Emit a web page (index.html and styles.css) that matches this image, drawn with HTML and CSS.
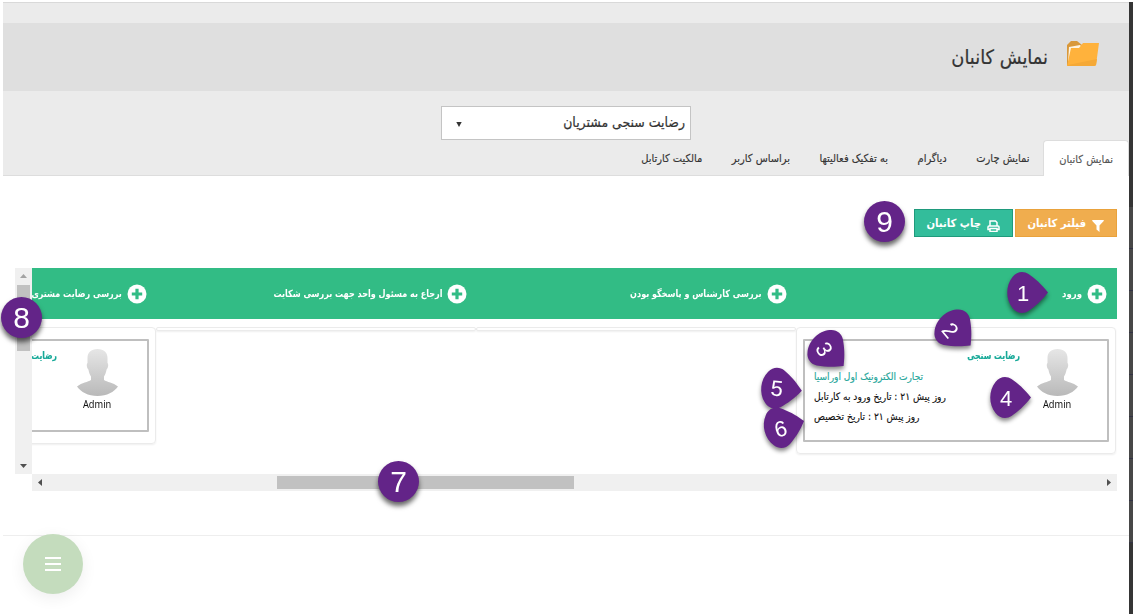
FILE: index.html
```
<!DOCTYPE html>
<html lang="fa" dir="rtl">
<head>
<meta charset="utf-8">
<title>نمایش کانبان</title>
<link rel="stylesheet" href="styles.css">
</head>
<body>
<svg class="defs" width="0" height="0" aria-hidden="true">
  <defs>
    <linearGradient id="grey" x1="0" y1="0" x2="0" y2="1"><stop offset="0" stop-color="#e6e6e6"/><stop offset="1" stop-color="#b9b9b9"/></linearGradient>
    <symbol id="plus" viewBox="0 0 20 20"><circle cx="10" cy="10" r="9.5" fill="#fff"/><path d="M10 4.8v10.4M4.8 10h10.4" stroke="#32bc85" stroke-width="3.2"/></symbol>
    <symbol id="person" viewBox="0 0 41 47"><path d="M20.500 0C27 0 30.500 3.500 30.500 9v5c1.200 1 .8 5-.9 6.500C29 24 28 26 27 27.500v3.500c3 2 9 2.500 14 6.500C37 43 30 47 20.500 47S4 43 0 37.500C5 33.500 11 33 14 31v-3.500C13 26 12 24 11.400 20.500 9.700 19 9.300 15 10.500 14V9C10.500 3.500 14 0 20.500 0Z" fill="url(#grey)"/></symbol>
    <symbol id="drop" viewBox="-30 -30 60 60"><path d="M27 0C20-9 14-14 7.500-18.500C3-21.500-4-21.500-8.500-15.500C-15.500-7-15.500 7-8.500 15.500C-4 21.500 3 21.500 7.500 18.500C14 14 20 9 27 0Z" fill="#632488"/></symbol>
  </defs>
</svg>
<div class="frame">
  <main class="page">
    <header class="top">
      <div class="titlebar">
        <svg class="folder" width="33" height="26" viewBox="0 0 33 26"><path d="M1 24V4L5 0h6l5 4h8v5L3 25Z" fill="#d9983a"/><path d="M2 22 3 6l11-2 3 3-9 2Z" fill="#fff3de"/><path d="M5 7h8l4-5h16l-3 22q-.3 1-2 1H1Z" fill="#ffb23c"/><path d="M2 24 31 18l-1 6-2 1H1Z" fill="#f5a937"/></svg>
        <h1>نمایش کانبان</h1>
      </div>
      <div class="picker"><div class="select"><span>رضایت سنجی مشتریان</span><svg width="6" height="5" viewBox="0 0 6 5"><path d="M.3 0h5.400L3 5Z" fill="#333"/></svg></div></div>
      <nav class="tabs">
        <a class="tab active">نمایش کانبان</a><a class="tab">نمایش چارت</a><a class="tab">دیاگرام</a><a class="tab">به تفکیک فعالیتها</a><a class="tab">براساس کاربر</a><a class="tab">مالکیت کارتابل</a>
      </nav>
    </header>
    <div class="actions">
      <button class="btn filter"><svg width="12" height="12" viewBox="0 0 12 12"><path d="M.5 0h11q.6.5.2 1L7.500 5.500V12L4.500 9.500v-4L.3 1Q0 .4.500 0Z" fill="#fff"/></svg><span>فیلتر کانبان</span></button>
      <button class="btn print"><svg width="13" height="12" viewBox="0 0 13 12"><path d="M3 6V1h5.500L10 2.500V6M2.500 9.500H1V7q0-1 1-1h9q1 0 1 1v2.500h-1.500M3 8.500h7v3H3Z" fill="none" stroke="#fff" stroke-width="1.500"/></svg><span>چاپ کانبان</span></button>
    </div>
    <section class="board">
      <div class="view">
        <div class="heads">
          <div class="head"><svg width="20" height="20"><use href="#plus"/></svg><b class="first">ورود</b></div>
          <div class="head"><svg width="20" height="20"><use href="#plus"/></svg><b>بررسی کارشناس و پاسخگو بودن</b></div>
          <div class="head"><svg width="20" height="20"><use href="#plus"/></svg><b>ارجاع به مسئول واحد جهت بررسی شکایت</b></div>
          <div class="head"><svg width="20" height="20"><use href="#plus"/></svg><b>بررسی رضایت مشتری</b></div>
        </div>
        <div class="columns">
          <div class="column">
            <article class="card">
              <div class="user"><svg width="41" height="47"><use href="#person"/></svg><span>Admin</span></div>
              <div class="info">
                <b>رضایت سنجی</b>
                <p class="company">تجارت الکترونیک اول اوراسیا</p>
                <p>روز پیش ۲۱ : تاریخ ورود به کارتابل</p>
                <p>روز پیش ۲۱ : تاریخ تخصیص</p>
              </div>
            </article>
          </div>
          <div class="column"></div>
          <div class="column"></div>
          <div class="column">
            <article class="card short">
              <div class="user"><svg width="41" height="47"><use href="#person"/></svg><span>Admin</span></div>
              <div class="info"><b>رضایت</b></div>
            </article>
          </div>
        </div>
      </div>
      <div class="vbar"><svg width="7" height="4"><path d="M0 4h7L3.500 0Z" fill="#a3a3a3"/></svg><i></i><svg width="7" height="4"><path d="M0 0h7L3.500 4Z" fill="#505050"/></svg></div>
      <div class="hbar"><svg width="4" height="7"><path d="M4 0v7L0 3.500Z" fill="#505050"/></svg><i></i><svg width="4" height="7"><path d="M0 0v7l4-3.500Z" fill="#505050"/></svg></div>
    </section>
    <footer></footer>
  </main>
  <aside class="rail"><i></i><i></i><i></i><i></i><i></i><i></i><i></i><i></i></aside>
</div>
<button class="fab"><i></i><i></i><i></i></button>
<svg class="marks" width="1133" height="614" viewBox="0 0 1133 614">
  <g class="dot"><circle cx="884.500" cy="221.500" r="20.500"/><circle cx="21.500" cy="317.500" r="20.500"/><circle cx="398.500" cy="481.500" r="20.500"/></g>
  <g class="shade">
    <use href="#drop" x="-30" y="-30" width="60" height="60" transform="translate(1021 292.500)"/>
    <use href="#drop" x="-30" y="-30" width="60" height="60" transform="translate(951.500 326.500) rotate(45)"/>
    <use href="#drop" x="-30" y="-30" width="60" height="60" transform="translate(824.500 347) rotate(45)"/>
    <use href="#drop" x="-30" y="-30" width="60" height="60" transform="translate(1004 397.500)"/>
    <use href="#drop" x="-30" y="-30" width="60" height="60" transform="translate(775 388) rotate(6)"/>
    <use href="#drop" x="-30" y="-30" width="60" height="60" transform="translate(778 428) rotate(-15)"/>
  </g>
  <g class="num big"><text x="884.500" y="231.500">9</text><text x="21.500" y="328">8</text><text x="398.500" y="492">7</text></g>
  <g class="num">
    <text x="1023" y="300.500">1</text>
    <text transform="translate(950.500 330) rotate(50)" y="8">2</text>
    <text transform="translate(824.500 349) rotate(58)" y="8">3</text>
    <text x="1006" y="405.500">4</text>
    <text transform="translate(777 388) rotate(6)" y="8">5</text>
    <text transform="translate(780.500 428.500) rotate(-15)" y="8">6</text>
  </g>
</svg>
</body>
</html>
```
FILE: styles.css
```
* { box-sizing: border-box; }
body { margin: 0; width: 1133px; height: 614px; overflow: hidden; position: relative; background: #fff; color: #333; font-family: "DejaVu Sans Condensed", "DejaVu Sans", sans-serif; font-stretch: condensed; }
svg { display: block; flex: none; }
.defs { position: absolute; }
.frame { display: flex; direction: ltr; height: 614px; padding: 2px 0 0 3px; }
.page { direction: rtl; width: 1126px; }
.top { height: 174px; background: #ebebeb; border-top: 1px solid #d9d9d9; border-bottom: 1px solid #ddd; padding-top: 20px; }
.titlebar { height: 68px; background: #dfdfdf; display: flex; align-items: center; gap: 18px; padding: 0 30px 7px 0; }
h1 { margin: 8px 0 0; font-size: 19.8px; line-height: 30px; font-weight: 400; white-space: nowrap; -webkit-text-stroke: .2px; }
.picker { display: flex; justify-content: center; padding-top: 15px; }
.select { width: 250px; height: 34px; border: 1px solid #c4c4c4; background: #fff; display: flex; align-items: center; justify-content: space-between; padding: 2px 5px 5px 14px; font-size: 13.9px; white-space: nowrap; -webkit-text-stroke: .2px; }
.select svg { margin-top: 6px; }
.tabs { display: flex; gap: 29.500px; height: 36px; font-size: 11px; white-space: nowrap; -webkit-text-stroke: .15px; }
.tab { height: 36px; line-height: 38px; }
.active { width: 86px; margin-left: -16px; padding-right: 15px; border: 1px solid #ddd; border-bottom: 0; border-radius: 4px 4px 0 0; background: #fff; color: #555; line-height: 37px; }
.actions { display: flex; gap: 2px; padding: 33px 12px 0 0; }
.btn { height: 28px; display: flex; align-items: center; gap: 6px; padding: 1px 12px 0 0; font: bold 11.2px "DejaVu Sans Condensed", "DejaVu Sans", sans-serif; font-stretch: condensed; color: #fff; white-space: nowrap; }
.btn svg { margin-top: 4px; }
.filter { width: 102px; background: #f0ad4e; border: 1px solid #e9a23c; }
.print { width: 99px; background: #33bd9b; border: 1px solid #1f9a7c; }
.board { direction: ltr; display: grid; grid-template-columns: 17px 1085px; grid-template-rows: 206px 17px; margin: 31px 0 0 12px; }
.view { direction: rtl; grid-area: 1/2; overflow: hidden; }
.vbar { grid-area: 1/1; background: #f0f0f0; display: flex; flex-direction: column; align-items: center; padding: 6px 0; }
.vbar i { width: 13px; height: 66px; background: #c1c1c1; margin: 7px 0 auto; }
.hbar { grid-area: 2/2; background: #f0f0f0; display: flex; align-items: center; padding: 0 6px; }
.hbar i { width: 297px; height: 13px; background: #c1c1c1; margin: 0 auto 0 235px; }
.heads { display: flex; height: 51px; background: #32bc85; }
.head { flex: 0 0 320px; display: flex; align-items: center; gap: 5px; padding-right: 10px; color: #fff; white-space: nowrap; }
.head b { font-size: 10px; transform: scaleX(.897); transform-origin: right; }
.head .first { transform: scaleX(.95); }
.columns { display: flex; align-items: flex-start; padding: 8px 1px 0 0; }
.column { flex: 0 0 320px; border: 1px solid #ebebeb; border-radius: 4px; box-shadow: 0 1px 2px #0001; padding: 11px 6px; min-height: 4px; }
.column:empty { padding: 1px; }
.card { height: 103px; border: 2px solid #bfbfbf; border-radius: 1px; display: flex; padding: 8px 28px 0 9px; }
.short { height: 93px; }
.user { width: 43px; display: flex; flex-direction: column; align-items: center; font: 10.500px "Noto Sans", "Open Sans", sans-serif; color: #111; }
.user span { line-height: 17px; transform: scaleX(.88); }
.info { flex: 1; padding-right: 16px; white-space: nowrap; color: #111; -webkit-text-stroke: .15px; }
.info b { display: block; height: 18px; line-height: 14px; color: #17a998; font-size: 10px; transform: scaleX(.86); transform-origin: right; }
.short .info { padding-right: 19px; }
.info p { margin: 0; line-height: 20px; font-size: 10.100px; text-align: left; }
.info .company { color: #26a69a; }
.short .info b { transform: scaleX(.85); }
footer { margin-top: 44px; border-top: 1px solid #eee; }
.rail { width: 4px; background: #353535; padding-top: 205px; }
.rail i { display: block; height: 42px; background: #474747; border-bottom: 1px solid #333344; }
.fab { position: absolute; left: 23px; top: 534px; width: 60px; height: 60px; border: 0; border-radius: 50%; background: #c4dcbd; box-shadow: 0 4px 16px #00000012; display: flex; flex-direction: column; align-items: center; justify-content: center; gap: 4px; }
.fab i { width: 16px; height: 2px; background: #fff; }
.marks { position: absolute; left: 0; top: 0; direction: ltr; }
.dot { fill: #632488; filter: drop-shadow(0 4px 2.500px #0009); }
.shade { filter: drop-shadow(0 3px 2px #0007); }
.num { fill: #fff; font: 22px "Liberation Sans", sans-serif; text-anchor: middle; }
.big { font-size: 30px; }
```
